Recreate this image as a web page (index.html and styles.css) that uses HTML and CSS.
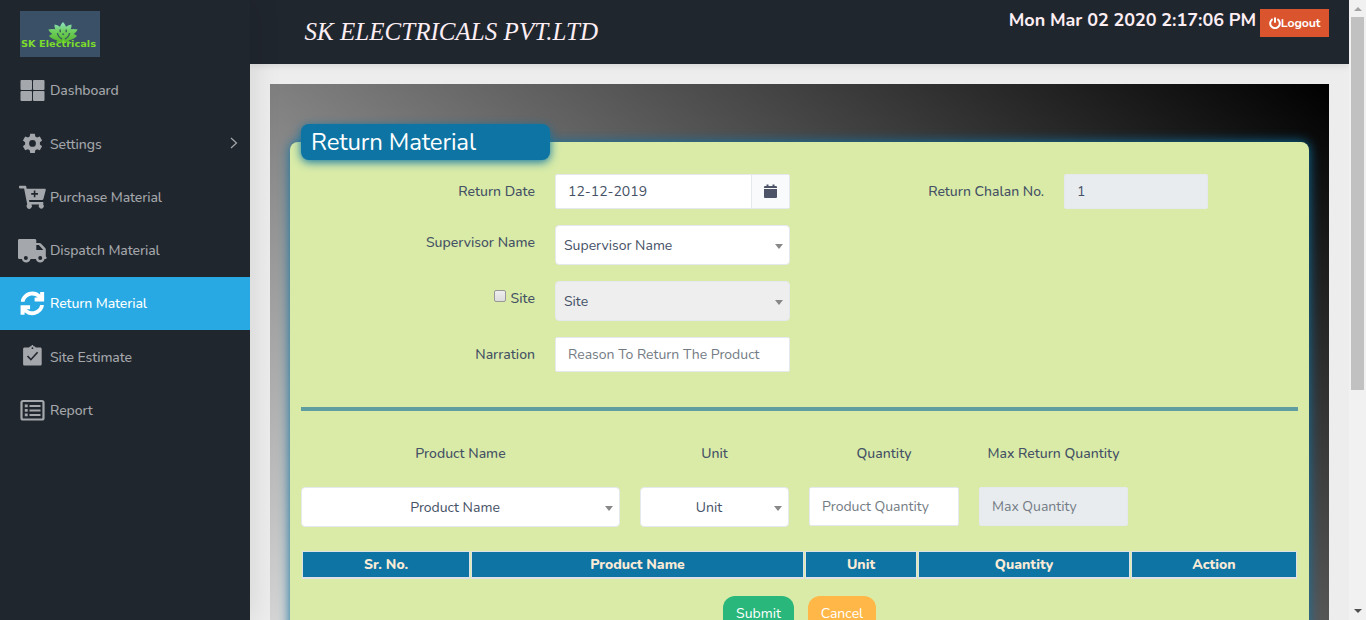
FILE: index.html
```
<!DOCTYPE html>
<html lang="en">
<head>
<meta charset="utf-8">
<title>Return Material</title>
<link rel="stylesheet" href="styles.css">
</head>
<body>
<div class="app">
  <aside class="sidebar">
    <div class="brand">
      <svg class="logo" viewBox="0 0 80 46">
        <defs><linearGradient id="leaf" x1="0" y1="0" x2="0" y2="1"><stop offset="0" stop-color="#8fe0c8"/><stop offset=".45" stop-color="#6fcf60"/><stop offset="1" stop-color="#55b82c"/></linearGradient></defs>
        <rect width="80" height="46" fill="#3a5067"/>
        <path fill="url(#leaf)" d="M43 11q2.200 2 3 4.800 2.500-2 5.500-2.300.2 2.500-.8 4.800 3.300-.8 7 .2-1.300 2.800-4 4.500 1.800.5 3.300 2-3 3.500-8.500 4.200 1 .8 1.500 1.800h-14q.5-1 1.500-1.800-5.500-.7-8.500-4.200 1.500-1.500 3.300-2-2.700-1.700-4-4.500 3.700-1 7-.2-1-2.300-.8-4.800 3 .3 5.500 2.300.8-2.800 3-4.800z"/>
        <path fill="none" stroke="#3a5f5c" stroke-width="1.400" d="M40.200 18.500v2.700M46.200 18.500v2.700M42.300 23.200h1.800M37.500 22q.5 4 4.500 6M49.500 22q-.5 4-4.500 6"/>
        <text class="logo-text" x="1" y="35.500" textLength="75" lengthAdjust="spacingAndGlyphs">SK Electricals</text>
      </svg>
    </div>
    <nav class="menu">
      <a class="item"><svg class="icon" viewBox="0 0 30 26"><g fill="currentColor"><rect x="3.500" y="2" width="11.500" height="10" rx="1"/><rect x="16" y="2" width="11.500" height="10" rx="1"/><rect x="3.500" y="13" width="11.500" height="10" rx="1"/><rect x="16" y="13" width="11.500" height="10" rx="1"/></g></svg><span>Dashboard</span></a>
      <a class="item"><svg class="icon" viewBox="0 0 30 26"><path transform="translate(.5 -.3)" fill="currentColor" fill-rule="evenodd" d="M12.700 3h4.600l.5 2.800 1.800 1 2.700-1 2.300 4-2.200 1.800v2.200l2.200 1.800-2.300 4-2.700-1-1.800 1-.5 2.800h-4.600l-.5-2.800-1.800-1-2.700 1-2.300-4 2.200-1.800v-2.200L5.400 9.800l2.300-4 2.700 1 1.800-1zM15 9.300a3.400 3.400 0 1 0 0 6.800 3.400 3.400 0 0 0 0-6.800z"/></svg><span class="settings">Settings</span><svg class="chevron" viewBox="0 0 8 12"><path d="M1 1l5.500 5L1 11" fill="none" stroke="currentColor" stroke-width="1.200"/></svg></a>
      <a class="item"><svg class="icon" viewBox="0 0 30 26"><path transform="translate(.4 .8)" fill="currentColor" fill-rule="evenodd" d="M2.500 1h5c.9 0 1.300.5 1.500 1.400l.3 1.600h18c.9 0 1.200.6 1 1.400L26 14.200c-.2.700-.6 1-1.300 1H11.600l.4 2h13c.9 0 1.200.6 1 1.400l-.3.8a2.600 2.600 0 1 1-4 .4h-7.600a2.700 2.700 0 1 1-4.300-.3L6.700 3.700H2.500c-1 0-1.400-2.700 0-2.700zM16.400 5.700v2.600h-2.600v1.600h2.600v2.600H18V9.900h2.600V8.300H18V5.700z"/></svg><span>Purchase Material</span></a>
      <a class="item"><svg class="icon" viewBox="0 0 30 26"><path fill="currentColor" fill-rule="evenodd" d="M2.300 1h15.500c.9 0 1.500.6 1.500 1.500V5h3.200c.6 0 1 .2 1.400.6l4.300 4.300c.4.400.6.900.6 1.500v7.200c1 .1 1.200 2.200 0 2.400h-1.300a4.400 4.400 0 0 1-8.600 0h-5.400a4.400 4.400 0 0 1-8.600 0H2.300C1.400 21 1 20.400 1 19.500v-17C1 1.600 1.500 1 2.300 1zm17 6v5h7L21.800 7zM8.800 18a2 2 0 1 0 .1 4 2 2 0 0 0-.1-4zm14.400 0a2 2 0 1 0 .1 4 2 2 0 0 0-.1-4z"/></svg><span>Dispatch Material</span></a>
      <a class="item active"><svg class="icon" viewBox="0 0 30 26"><g transform="translate(3.200 .2) scale(.0475)"><path fill="currentColor" d="M370.700 133.300C339.500 104 298.900 88 255.800 88c-77.500.1-144.300 53.200-162.800 126.900-1.300 5.400-6.100 9.100-11.700 9.100H24.100c-7.500 0-13.200-6.800-11.800-14.200C33.900 94.900 134.800 8 256 8c66.400 0 126.800 26.100 171.300 68.700L420 68V16h84v200H304v-84h68zM32 296h176v84h-67l.3-1.200c31.300 29.300 71.800 45.300 114.900 45.300 77.400-.1 144.300-53.100 162.800-126.800 1.300-5.400 6.100-9.100 11.700-9.100h57.300c7.500 0 13.200 6.800 11.800 14.200C478.100 417.100 377.200 504 256 504c-66.400 0-126.800-26.100-171.300-68.700L92 444v52H8V296z"/></g></svg><span>Return Material</span></a>
      <a class="item"><svg class="icon" viewBox="0 0 30 26"><path transform="translate(.4)" fill="currentColor" fill-rule="evenodd" d="M7.300 3.500h4.200l1.500-1.300h1c0-1.600 2-1.600 2 0h1l1.500 1.300h4.200c1 0 1.600.6 1.600 1.600v14.800c0 1-.6 1.600-1.600 1.600H7.300c-1 0-1.600-.6-1.600-1.600V5.100c0-1 .6-1.600 1.600-1.600zM15 3.300a.9.900 0 1 0 .1 1.800.9.900 0 0 0-.1-1.800zM9.500 12.500l4 4.300 7.300-8-1.200-1.100-6.100 6.700-2.800-3z"/></svg><span>Site Estimate</span></a>
      <a class="item"><svg class="icon" viewBox="0 0 30 26"><rect x="4.500" y="4" width="22" height="18.500" rx="1.500" fill="none" stroke="currentColor" stroke-width="2.200"/><path transform="translate(.5)" fill="currentColor" d="M7.300 7.500h2.900v2.700H7.300zm0 4.500h2.900v2.700H7.300zm0 4.500h2.900v2.700H7.300zM12 8h11v2H12zm0 4.400h11v2H12zm0 4.500h11v2H12z"/></svg><span>Report</span></a>
    </nav>
  </aside>
  <div class="main">
    <header class="topbar">
      <h1 class="company">SK ELECTRICALS PVT.LTD</h1>
      <div class="session">
        <span class="clock">Mon Mar 02 2020 2:17:06 PM</span>
        <button class="logout"><svg class="power" viewBox="0 0 12 12"><path d="M3.600 2.200a4.800 4.800 0 1 0 4.800 0M6 .5v5.300" fill="none" stroke="currentColor" stroke-width="2"/></svg><span>Logout</span></button>
      </div>
    </header>
    <main class="content">
      <div class="backdrop">
        <section class="card">
          <h2 class="title">Return Material</h2>
          <div class="form">
            <label>Return Date</label>
            <div class="input date"><span>12-12-2019</span><span class="addon"><svg viewBox="0 0 13 15"><path fill="currentColor" d="M0 4V3.200C0 2.400.5 2 1.200 2H2.500V.5h2V2h4V.5h2V2h1.300c.7 0 1.200.4 1.200 1.200V4zM0 5h13v7.800c0 .8-.5 1.200-1.200 1.200H1.200C.5 14 0 13.600 0 12.800z"/></svg></span></div>
            <label class="chalan">Return Chalan No.</label>
            <div class="input readonly">1</div>
            <label>Supervisor Name</label>
            <div class="select"><span>Supervisor Name</span></div>
            <label><i class="check"></i>Site</label>
            <div class="select disabled"><span>Site</span></div>
            <label>Narration</label>
            <div class="input hint">Reason To Return The Product</div>
          </div>
          <hr class="rule">
          <div class="products">
            <span class="head">Product Name</span><span class="head">Unit</span><span class="head">Quantity</span><span class="head">Max Return Quantity</span>
            <div class="select center"><span>Product Name</span></div>
            <div class="select center"><span>Unit</span></div>
            <div class="input hint tall">Product Quantity</div>
            <div class="input hint tall readonly">Max Quantity</div>
          </div>
          <div class="table">
            <div class="th">Sr. No.</div><div class="th">Product Name</div><div class="th">Unit</div><div class="th">Quantity</div><div class="th">Action</div>
          </div>
          <div class="actions"><button class="btn submit">Submit</button><button class="btn cancel">Cancel</button></div>
        </section>
      </div>
    </main>
  </div>
  <div class="scrollbar"><i class="up"></i><i class="thumb"></i><i class="down"></i></div>
</div>
</body>
</html>
```
FILE: styles.css
```
* { box-sizing: border-box; }
body { margin: 0; height: 620px; overflow: hidden; font: 14px/20px Nunito, Lato, sans-serif; color: #455165; }
button { font-family: inherit; border: 0; }
.app { display: flex; height: 620px; overflow: hidden; }
.sidebar { flex: 0 0 250px; background: #20262e; box-shadow: 0 0 30px rgba(0,0,0,.12); z-index: 1; }
.brand { height: 64px; padding: 11px 20px; }
.logo { display: block; width: 80px; height: 46px; }
.logo-text { font: 900 9px "DejaVu Sans", sans-serif; fill: #7cdc2c; }
.menu { display: flex; flex-direction: column; }
.item { display: flex; align-items: center; height: 53.300px; padding-left: 17px; color: #a4a7ab; font-weight: 500; letter-spacing: -.1px; }
.item span { padding-top: 1px; }
.item .settings { padding-top: 2px; }
.item.active { background: #28a9e3; color: #fff; }
.icon { width: 30px; height: 26px; margin-right: 3px; flex: none; }
.chevron { width: 8px; height: 12px; margin: 0 12px 1px auto; }
.main { flex: 1; min-width: 0; background: #ededed; }
.topbar { height: 64px; display: flex; justify-content: space-between; padding: 9px 20px 0 54.500px; background: #20262e; box-shadow: 0 1px 8px rgba(0,0,0,.12); color: #fdeef4; }
.company { margin: 6px 0 0; font: italic 25px/34px "Liberation Serif", serif; letter-spacing: .03px; }
.session { display: flex; gap: 4px; }
.clock { font-size: 18px; line-height: 22px; font-weight: 700; letter-spacing: -.05px; }
.logout { display: flex; align-items: center; justify-content: center; width: 69px; height: 28px; padding: 0; background: #da542e; color: #fff; font-size: 12.300px; font-weight: 700; letter-spacing: -.1px; }
.power { width: 12px; height: 12px; }
.content { padding: 20px; }
.backdrop { height: 804px; padding: 58px 20px 0; background: linear-gradient(to top right, #fff, #000); }
.card { height: 680px; padding: 0 11px; background: #d9eba7; border-radius: 8px; box-shadow: 0 0 12px #0d74a4; display: flow-root; }
.title { width: 249px; height: 36px; margin: -18px 0 14px; padding-left: 10px; border-radius: 8px; background: #0d74a4; box-shadow: 0 2px 10px #0d74a4; color: #fff; font-size: 24px; font-weight: 400; line-height: 36px; letter-spacing: -.15px; }
.form { display: grid; grid-template-columns: 234px 235px 234px 144px; grid-template-rows: 35px 40px 40px 35px; column-gap: 20px; row-gap: 16px; }
.form label { text-align: right; line-height: 35px; grid-column: 1; font-weight: 500; }
.form label.chalan { grid-column: 3; }
.input { height: 35px; display: flex; align-items: center; padding: 0 12px; background: #fff; border: 1px solid #e5e9ed; border-radius: 2px; }
.date { padding-right: 0; justify-content: space-between; }
.addon { width: 38px; height: 33px; display: flex; align-items: center; justify-content: center; background: #f8fafc; border-left: 1px solid #e5e9ed; color: #4d5468; }
.addon svg { width: 13px; height: 15px; }
.readonly { background: #e8ecef; }
.hint { color: #737b84; }
.tall { height: 39px; }
.select { height: 40px; display: flex; align-items: center; justify-content: space-between; padding: 1px 6px 0 8px; background: #fff; border: 1px solid #e5e8ec; border-radius: 4px; }
.select::after { content: ""; margin-top: 2px; border: 4px solid transparent; border-top: 5px solid #888; border-bottom: 0; }
.select.center span { flex: 1; padding-right: 5px; text-align: center; }
.disabled { background: #eee; }
.check { display: inline-block; width: 12px; height: 12px; margin-right: 5px; vertical-align: 1px; border: 1px solid #999; border-radius: 2px; background: linear-gradient(#eee, #ddd); }
.rule { height: 4px; margin: 35px 0 33px; border: 0; background: #5f9ea0; }
.products { display: grid; grid-template-columns: 319px 149px 150px 149px; grid-template-rows: 20px 40px; column-gap: 20px; row-gap: 23px; }
.head { text-align: center; font-weight: 500; }
.table { display: grid; grid-template-columns: 168px 333px 112px 212px 166px; column-gap: 1px; margin: 24px 0 17px 1px; }
.th { height: 28px; background: #0d74a4; border: 1px solid #dee2e6; border-bottom-width: 2px; color: #faebd7; font-weight: 800; line-height: 25px; text-align: center; }
.actions { display: flex; gap: 14px; padding-left: 422px; }
.btn { height: 35px; padding: 0; border-radius: 12px; color: #fff; font-size: 14px; }
.submit { width: 71px; background: #2ab77b; }
.cancel { width: 68px; background: #ffb848; }
.scrollbar { flex: 0 0 17px; display: flex; flex-direction: column; align-items: center; background: #f1f1f1; }
.up { margin: 7px 0 6px; border: 4px solid transparent; border-top: 0; border-bottom: 4px solid #a3a3a3; }
.thumb { width: 13px; height: 373px; background: #c1c1c1; }
.down { margin: auto 0 7px; border: 4px solid transparent; border-bottom: 0; border-top: 4px solid #505050; }
```
